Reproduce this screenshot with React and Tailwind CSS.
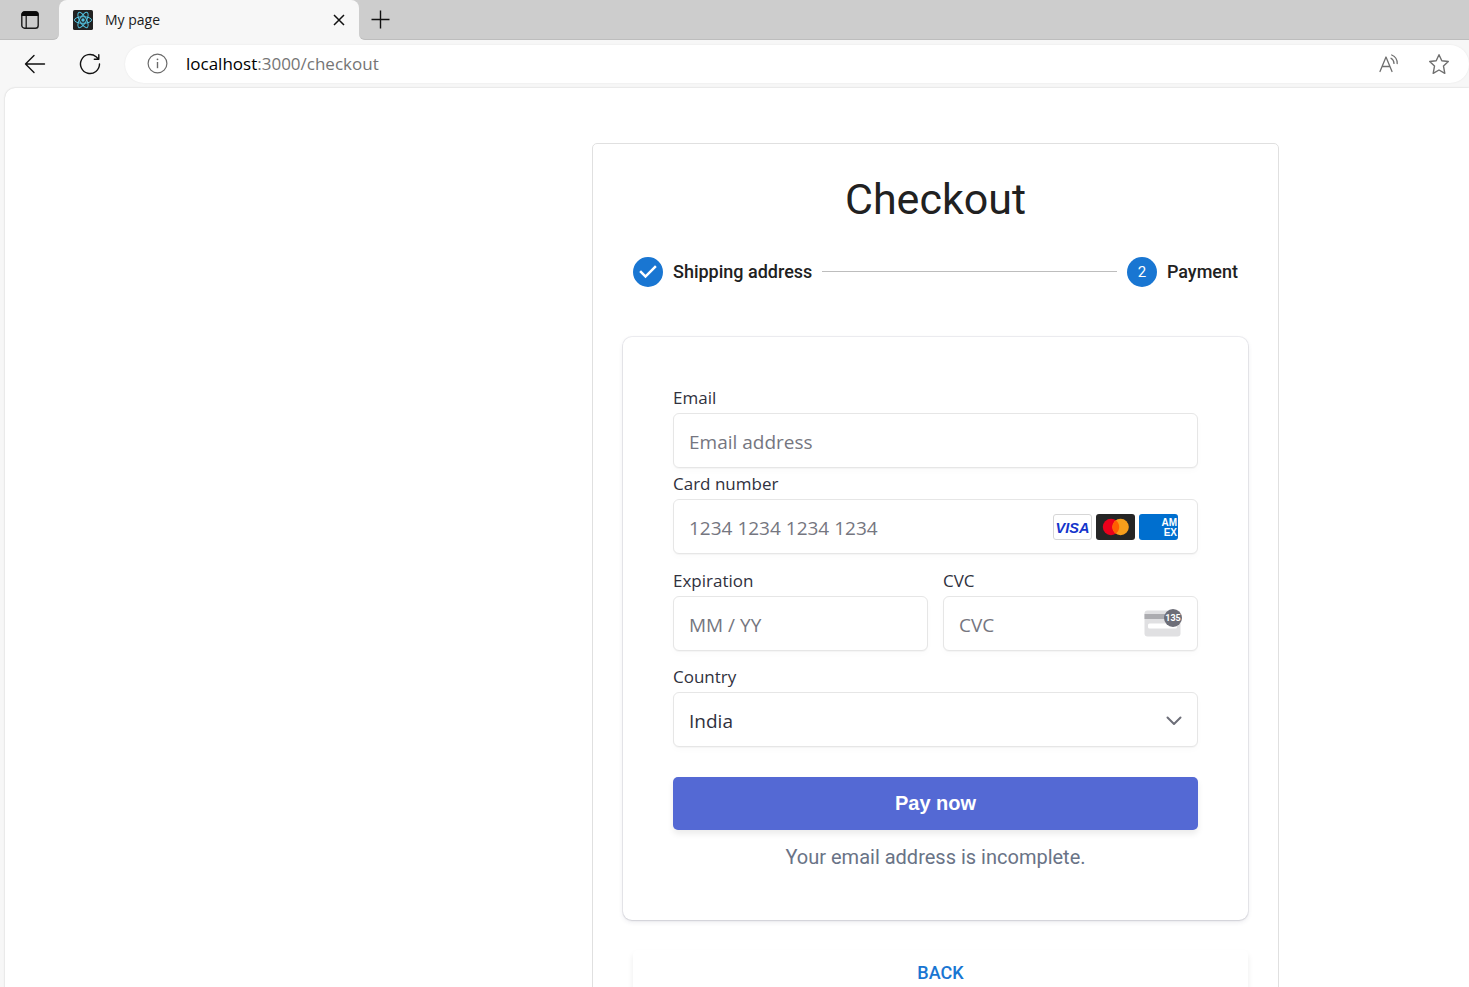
import React from "react";

const fieldBox =
  "h-[55px] w-full rounded-[6px] border border-[#e6e6e6] bg-white px-[15px] pt-0.5 text-[19px] leading-6 text-[#30313d] shadow-[0_1px_1px_rgba(0,0,0,0.03),0_3px_6px_rgba(0,0,0,0.02)] outline-none placeholder:text-[#757680]";
const fieldLabel = "block text-[17px] leading-6 text-[#30313d]";

function TabActionsIcon() {
  return (
    <svg width="20" height="20" viewBox="0 0 20 20" fill="none" aria-hidden="true">
      <rect x="1.800" y="1.800" width="16.400" height="16.400" rx="2.800" stroke="#1b1b1b" strokeWidth="1.400" />
      <path d="M1.500 6V4.500a3 3 0 0 1 3-3h11a3 3 0 0 1 3 3V6z" fill="#0a0a0a" />
      <path d="M6.200 6v12" stroke="#1b1b1b" strokeWidth="1.300" />
    </svg>
  );
}

function ReactFavicon() {
  return (
    <svg width="20" height="20" viewBox="0 0 20 20" fill="none" aria-hidden="true">
      <rect width="20" height="20" rx="1.600" fill="#222" />
      <g stroke="#53c1de" strokeWidth="1">
        <ellipse cx="10" cy="10" rx="8.600" ry="3.300" />
        <ellipse cx="10" cy="10" rx="8.600" ry="3.300" transform="rotate(60 10 10)" />
        <ellipse cx="10" cy="10" rx="8.600" ry="3.300" transform="rotate(120 10 10)" />
      </g>
      <circle cx="10" cy="10" r="1.700" fill="#53c1de" />
    </svg>
  );
}

function BrowserTabs() {
  return (
    <div className="flex h-10 bg-[#f7f7f7]">
      <div className="flex w-[59px] items-center justify-center rounded-br-[6px] border-b border-[#bdbdbd] bg-[#cdcdcd]">
        <button type="button" aria-label="Tab actions">
          <TabActionsIcon />
        </button>
      </div>
      <div className="flex w-[300px] items-center bg-[#cdcdcd]">
        <div className="flex h-full w-full items-center rounded-t-[8px] bg-[#f7f7f7] pr-3 pl-[14px]">
          <ReactFavicon />
          <span className="ml-3 flex-1 text-[14px] leading-5 text-[#1b1b1b]">My page</span>
          <button type="button" aria-label="Close tab" className="p-0.5">
            <svg width="12" height="12" viewBox="0 0 12 12" stroke="#111" strokeWidth="1.500" aria-hidden="true">
              <path d="M1 1l10 10M11 1L1 11" />
            </svg>
          </button>
        </div>
      </div>
      <div className="flex flex-1 items-center rounded-bl-[6px] border-b border-[#bdbdbd] bg-[#cdcdcd] pl-3">
        <button type="button" aria-label="New tab">
          <svg width="19" height="19" viewBox="0 0 19 19" stroke="#111" strokeWidth="1.400" aria-hidden="true">
            <path d="M9.500 0.500v18M0.500 9.500h18" />
          </svg>
        </button>
      </div>
    </div>
  );
}

function AddressBar() {
  return (
    <div className="flex h-12 items-center pb-px pl-6">
      <button type="button" aria-label="Back">
        <svg width="22" height="20" viewBox="0 0 22 20" fill="none" stroke="#111" strokeWidth="1.400" strokeLinecap="round" strokeLinejoin="round" aria-hidden="true">
          <path d="M10 1.500L1.500 10l8.500 8.500M1.500 10H20.500" />
        </svg>
      </button>
      <button type="button" aria-label="Refresh" className="ml-8">
        <svg width="24" height="24" viewBox="0 0 24 24" fill="none" stroke="#111" strokeWidth="1.400" strokeLinecap="round" strokeLinejoin="round" aria-hidden="true">
          <path d="M21.500 12a9.500 9.500 0 1 1-3.400-7.300L20.500 7M20.800 2.700V7.200H16.300" />
        </svg>
      </button>
      <div className="ml-[23px] flex h-[38px] flex-1 items-center rounded-full bg-white pr-[19px] pl-[22px] shadow-[0_0_2px_rgba(0,0,0,0.08)]">
        <button type="button" aria-label="Site information">
          <svg width="21" height="21" viewBox="0 0 21 21" fill="none" stroke="#6a6a6a" strokeWidth="1.200" aria-hidden="true">
            <circle cx="10.500" cy="10.500" r="9.400" />
            <path d="M10.500 9v6.200" strokeWidth="1.400" />
            <circle cx="10.500" cy="6.300" r="0.900" fill="#6a6a6a" stroke="none" />
          </svg>
        </button>
        <p className="ml-[18px] flex-1 text-[17px] leading-6 text-[#757575]">
          <span className="text-black">localhost</span>:3000/checkout
        </p>
        <button type="button" aria-label="Read aloud">
          <svg width="22" height="22" viewBox="0 0 22 22" fill="none" stroke="#6f6f6f" strokeWidth="1.300" strokeLinecap="round" strokeLinejoin="round" aria-hidden="true">
            <path d="M2 18.500L8 4l6 14.500M4.200 13.500h7.700" />
            <path d="M13 5.200a6 6 0 0 1 3 5.200M13.700 2a9 9 0 0 1 5.500 8.600" />
          </svg>
        </button>
        <button type="button" aria-label="Add to favorites" className="ml-7">
          <svg width="22" height="22" viewBox="0 0 22 22" fill="none" stroke="#6f6f6f" strokeWidth="1.400" strokeLinejoin="round" aria-hidden="true">
            <path d="M11 1.700l2.800 6 6.500.8-4.800 4.600 1.300 7.200L11 17l-5.800 3.300 1.300-7.200L1.700 8.500l6.500-.8z" />
          </svg>
        </button>
      </div>
    </div>
  );
}

function Stepper() {
  return (
    <ol className="mt-8 flex items-center px-[10px] font-['Roboto',sans-serif] text-[18px] leading-[30px] font-medium text-[#212121]">
      <li className="flex items-center gap-[10px]">
        <svg width="30" height="30" viewBox="0 0 24 24" aria-hidden="true">
          <path d="M12 0a12 12 0 1 0 0 24 12 12 0 0 0 0-24zm-2 17l-5-5 1.400-1.400 3.600 3.600 7.600-7.600L19 8l-9 9z" fill="#1976d2" />
        </svg>
        Shipping address
      </li>
      <li aria-hidden="true" className="mx-[10px] h-0.5 flex-1 border-t border-[#bdbdbd]" />
      <li className="flex items-center gap-[10px]" aria-current="step">
        <span className="flex size-[30px] items-center justify-center rounded-full bg-[#1976d2] text-[15px] font-normal text-white">
          2
        </span>
        Payment
      </li>
    </ol>
  );
}

function CardBrands() {
  return (
    <span className="pointer-events-none absolute inset-y-0 right-5 flex items-center gap-1">
      <svg width="39" height="26" viewBox="0 0 39 26" aria-label="Visa" role="img">
        <rect x="0.500" y="0.500" width="38" height="25" rx="2.500" fill="#fff" stroke="#d6d6d6" />
        <text x="19.500" y="18.500" textAnchor="middle" fontFamily="Liberation Sans, sans-serif" fontSize="14.500" fontWeight="700" fontStyle="italic" fill="#1434cb">
          VISA
        </text>
      </svg>
      <svg width="39" height="26" viewBox="0 0 39 26" aria-label="Mastercard" role="img">
        <rect width="39" height="26" rx="3" fill="#252525" />
        <circle cx="15" cy="13" r="8.200" fill="#eb001b" />
        <circle cx="24.600" cy="13" r="8.200" fill="#f79e1b" />
        <path d="M19.800 6.350a8.200 8.200 0 0 1 0 13.300 8.200 8.200 0 0 1 0-13.300z" fill="#ff5f00" />
      </svg>
      <svg width="39" height="26" viewBox="0 0 39 26" aria-label="American Express" role="img" className="rounded-[3px]">
        <rect width="39" height="26" fill="#006fcf" />
        <g fontFamily="Liberation Sans, sans-serif" fontSize="10" fontWeight="700" fill="#fff">
          <text x="38" y="12" textAnchor="end">AM</text>
          <text x="38" y="22" textAnchor="end">EX</text>
        </g>
      </svg>
    </span>
  );
}

function CvcIcon() {
  return (
    <svg width="39" height="28" viewBox="0 0 39 28" aria-hidden="true" className="pointer-events-none absolute top-[13px] right-[15px]">
      <rect x="0.500" y="1.500" width="36" height="26" rx="3" fill="#e0e0e2" />
      <rect x="0.500" y="5" width="36" height="5" fill="#acacb0" />
      <rect x="4" y="14.500" width="29" height="5" rx="1.500" fill="#fff" />
      <circle cx="29" cy="9" r="9" fill="#6d6e78" />
      <text x="29" y="12.300" textAnchor="middle" fontFamily="Roboto, sans-serif" fontSize="9" fontWeight="700" fill="#fff">
        135
      </text>
    </svg>
  );
}

function PaymentForm() {
  return (
    <form
      className="mt-[50px] rounded-[9px] bg-white px-[50px] pt-[49px] pb-[50px] shadow-[0_0_0_1px_rgba(50,50,93,0.08),0_2px_5px_rgba(50,50,93,0.1),0_1px_2px_rgba(0,0,0,0.07)]"
      onSubmit={(e) => e.preventDefault()}
    >
      <label htmlFor="email" className={fieldLabel}>Email</label>
      <input id="email" type="email" placeholder="Email address" className={fieldBox + " mt-[3px]"} />

      <label htmlFor="card" className={fieldLabel + " mt-1"}>Card number</label>
      <div className="relative mt-[3px]">
        <input id="card" placeholder="1234 1234 1234 1234" className={fieldBox} />
        <CardBrands />
      </div>

      <div className="mt-[15px] grid grid-cols-2 gap-[15px]">
        <div>
          <label htmlFor="exp" className={fieldLabel}>Expiration</label>
          <input id="exp" placeholder="MM / YY" className={fieldBox + " mt-[3px]"} />
        </div>
        <div>
          <label htmlFor="cvc" className={fieldLabel}>CVC</label>
          <div className="relative mt-[3px]">
            <input id="cvc" placeholder="CVC" className={fieldBox} />
            <CvcIcon />
          </div>
        </div>
      </div>

      <label htmlFor="country" className={fieldLabel + " mt-[14px]"}>Country</label>
      <div className="relative mt-[3px]">
        <select id="country" defaultValue="India" className={fieldBox + " appearance-none"}>
          <option>India</option>
        </select>
        <svg width="16" height="10" viewBox="0 0 16 10" fill="none" stroke="#6d6e78" strokeWidth="2" strokeLinecap="round" strokeLinejoin="round" aria-hidden="true" className="pointer-events-none absolute top-6 right-4">
          <path d="M1.500 1.500L8 8l6.500-6.500" />
        </svg>
      </div>

      <button
        type="submit"
        className="mt-[30px] block h-[53px] w-full rounded-[5px] bg-[#5469d4] pb-0.5 font-['Liberation_Sans',Arial,sans-serif] text-[20px] font-bold text-white shadow-[0_4px_6px_rgba(0,0,0,0.08)]"
      >
        Pay now
      </button>
      <p role="alert" className="mt-[15px] text-center font-['Roboto',sans-serif] text-[20px] leading-[25px] text-[#697386]">
        Your email address is incomplete.
      </p>
    </form>
  );
}

export default function App() {
  return (
    <div className="flex min-h-screen flex-col bg-[#f7f7f7] font-['Open_Sans','Noto_Sans',sans-serif]">
      <header>
        <BrowserTabs />
        <AddressBar />
      </header>
      <main className="ml-[5px] h-[899px] flex-1 overflow-hidden rounded-tl-[10px] bg-white pt-[55px] pr-[190px] pl-[587px] shadow-[0_0_2px_rgba(0,0,0,0.2)]">
        <section className="rounded-[5px] border border-[#e0e0e0] px-[30px] pt-[29px] pb-[30px]">
          <h1 className="text-center font-['Roboto',sans-serif] text-[43px] leading-[52px] text-[#212121]">Checkout</h1>
          <Stepper />
          <PaymentForm />
          <div className="mt-[30px] pl-[10px]">
            <button type="button" className="block h-11 w-full rounded-[5px] font-['Roboto',sans-serif] text-[18px] font-medium text-[#1976d2] shadow-[0_4px_6px_rgba(0,0,0,0.08)]">
              BACK
            </button>
          </div>
        </section>
      </main>
    </div>
  );
}
